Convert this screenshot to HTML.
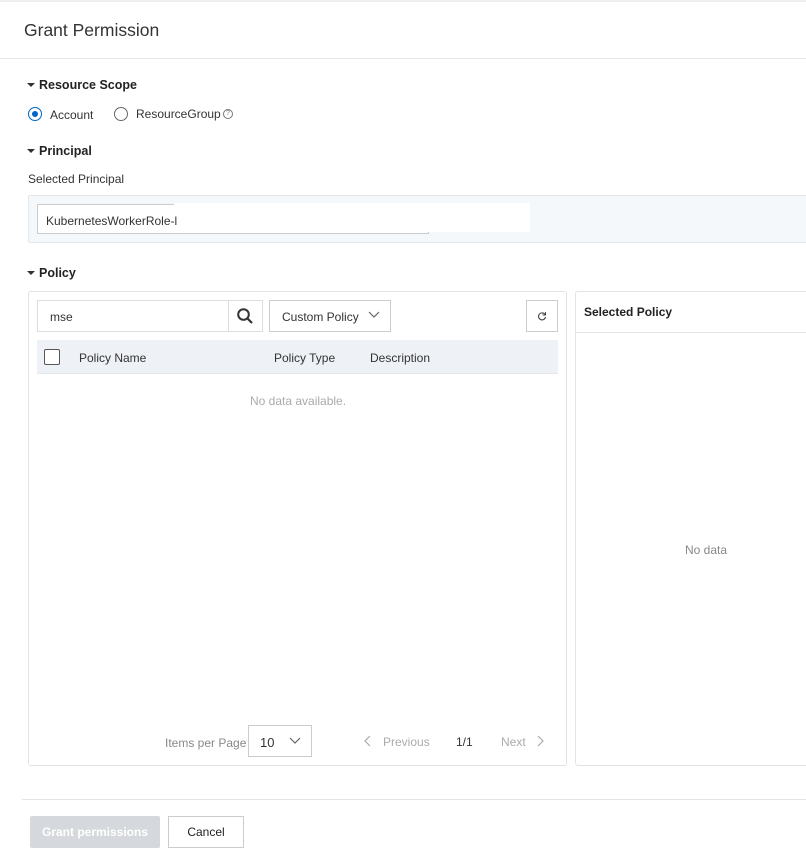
<!DOCTYPE html>
<html><head><style>
*{box-sizing:border-box;margin:0;padding:0}
body{width:806px;height:855px;overflow:hidden;background:#fff;font-family:"Liberation Sans",sans-serif;font-size:12px;color:#333;position:relative}
.a{position:absolute}
.h{font-weight:bold;font-size:12.5px;color:#222}
.tri{display:inline-block;width:0;height:0;border-left:4px solid transparent;border-right:4px solid transparent;border-top:4px solid #333;margin-right:4px;vertical-align:2px}
.gray{color:#aaa}
</style></head><body>
<div class="a" style="left:0;top:0;width:806px;height:2px;background:#eee"></div>
<div class="a" style="left:24px;top:20px;font-size:17.5px;color:#333">Grant Permission</div>
<div class="a" style="left:0;top:58px;width:806px;height:1px;background:#e5e5e5"></div>

<div class="a h" style="left:27px;top:78px"><span class="tri"></span>Resource Scope</div>
<div class="a" style="left:28px;top:107px;width:14px;height:14px;border:1.5px solid #0064c8;border-radius:50%"><div style="position:absolute;left:2.5px;top:2.5px;width:6px;height:6px;border-radius:50%;background:#0064c8"></div></div>
<div class="a" style="left:50px;top:108px">Account</div>
<div class="a" style="left:114px;top:107px;width:14px;height:14px;border:1px solid #666;border-radius:50%"></div>
<div class="a" style="left:136px;top:107px">ResourceGroup</div>
<div class="a" style="left:223px;top:109px;width:10px;height:10px;border:1px solid #777;border-radius:50%;font-size:7px;line-height:8px;text-align:center;color:#777">?</div>

<div class="a h" style="left:27px;top:144px"><span class="tri"></span>Principal</div>
<div class="a" style="left:28px;top:172px">Selected Principal</div>
<div class="a" style="left:28px;top:195px;width:790px;height:48px;background:#f5f8fb;border:1px solid #e3e6ea;border-radius:2px"></div>
<div class="a" style="left:37px;top:204px;width:392px;height:30px;background:#fff;border:1px solid #ccc"></div>
<div class="a" style="left:174px;top:203px;width:356px;height:29px;background:#fff"></div>
<div class="a" style="left:46px;top:214px">KubernetesWorkerRole-l</div>

<div class="a h" style="left:27px;top:266px"><span class="tri"></span>Policy</div>
<div class="a" style="left:28px;top:291px;width:539px;height:475px;border:1px solid #e3e3e3;border-radius:3px"></div>
<div class="a" style="left:37px;top:300px;width:226px;height:32px;border:1px solid #ddd"></div>
<div class="a" style="left:228px;top:300px;width:1px;height:32px;background:#ddd"></div>
<div class="a" style="left:50px;top:310px">mse</div>
<svg class="a" style="left:236px;top:307px" width="18" height="18" viewBox="0 0 18 18"><circle cx="7.5" cy="7.5" r="5.3" fill="none" stroke="#333" stroke-width="2"/><path d="M11.5 11.5L16 16" stroke="#333" stroke-width="2.2"/></svg>
<div class="a" style="left:269px;top:300px;width:122px;height:32px;border:1px solid #ccc"></div>
<div class="a" style="left:282px;top:310px">Custom Policy</div>
<svg class="a" style="left:368px;top:311px" width="12" height="8"><path d="M1 1L6 6L11 1" fill="none" stroke="#666" stroke-width="1.2"/></svg>
<div class="a" style="left:526px;top:300px;width:32px;height:32px;border:1px solid #ccc"></div>
<svg class="a" style="left:537px;top:311px" width="10" height="10" viewBox="0 0 10 10"><path d="M8 3.5A3.5 3.5 0 1 0 8.5 6" fill="none" stroke="#444" stroke-width="1.1"/><path d="M8.5 1V4H5.5" fill="none" stroke="#444" stroke-width="1"/></svg>
<div class="a" style="left:37px;top:340px;width:521px;height:34px;background:#eef1f6;border-bottom:1px solid #e3e6ea"></div>
<div class="a" style="left:44px;top:349px;width:16px;height:16px;border:1px solid #555;border-radius:2px;background:#fff"></div>
<div class="a" style="left:79px;top:351px">Policy Name</div>
<div class="a" style="left:274px;top:351px">Policy Type</div>
<div class="a" style="left:370px;top:351px">Description</div>
<div class="a gray" style="left:250px;top:394px">No data available.</div>

<div class="a gray" style="left:165px;top:736px;color:#888">Items per Page</div>
<div class="a" style="left:248px;top:725px;width:64px;height:32px;border:1px solid #ccc"></div>
<div class="a" style="left:260px;top:735px;font-size:13px">10</div>
<svg class="a" style="left:289px;top:737px" width="12" height="8"><path d="M1 1L6 6L11 1" fill="none" stroke="#666" stroke-width="1.2"/></svg>
<svg class="a" style="left:364px;top:735px" width="8" height="12"><path d="M6 1L1 6L6 11" fill="none" stroke="#aaa" stroke-width="1.2"/></svg>
<div class="a gray" style="left:383px;top:735px">Previous</div>
<div class="a" style="left:456px;top:735px;color:#333">1/1</div>
<div class="a gray" style="left:501px;top:735px">Next</div>
<svg class="a" style="left:537px;top:735px" width="8" height="12"><path d="M1 1L6 6L1 11" fill="none" stroke="#aaa" stroke-width="1.2"/></svg>

<div class="a" style="left:575px;top:291px;width:240px;height:475px;border:1px solid #e3e3e3;border-radius:3px"></div>
<div class="a" style="left:575px;top:332px;width:240px;height:1px;background:#e3e3e3"></div>
<div class="a h" style="left:584px;top:305px;font-size:12px">Selected Policy</div>
<div class="a gray" style="left:685px;top:543px;color:#888">No data</div>

<div class="a" style="left:22px;top:799px;width:790px;height:1px;background:#e3e3e3"></div>
<div class="a" style="left:30px;top:816px;width:130px;height:32px;background:#d5d8dc;border-radius:2px;color:#fff;font-weight:bold;text-align:center;line-height:32px">Grant permissions</div>
<div class="a" style="left:168px;top:816px;width:76px;height:32px;border:1px solid #ccc;text-align:center;line-height:30px;color:#222">Cancel</div>
</body></html>
